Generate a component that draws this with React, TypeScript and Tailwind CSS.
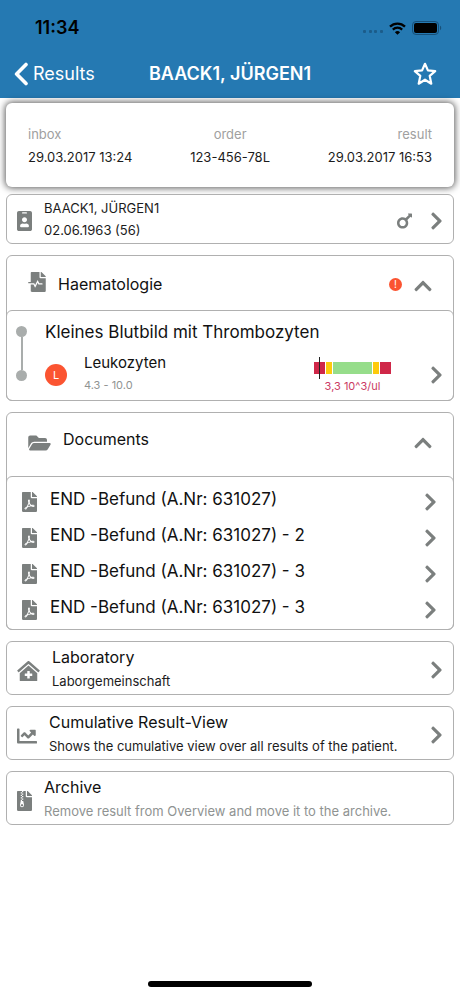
import type { ReactNode } from "react";
import {
  FaChartLine,
  FaChevronRight,
  FaChevronUp,
  FaClinicMedical,
  FaFileArchive,
  FaFileMedicalAlt,
  FaFilePdf,
  FaFolderOpen,
  FaIdBadge,
  FaMars,
} from "react-icons/fa";

const documents = [
  "END -Befund (A.Nr: 631027)",
  "END -Befund (A.Nr: 631027) - 2",
  "END -Befund (A.Nr: 631027) - 3",
  "END -Befund (A.Nr: 631027) - 3",
];

function StatusBar() {
  return (
    <div className="flex h-12 items-center justify-between pt-2 pr-[18px] pl-[35px] text-black">
      <span className="text-[18px] leading-5 font-semibold">11:34</span>
      <div className="flex items-center gap-[6px]">
        <svg className="h-3 w-5" viewBox="0 0 20 12" fill="#1b5c8a" aria-hidden="true">
          <rect x="0" y="8" width="3" height="3" rx="1" />
          <rect x="6" y="8" width="3" height="3" rx="1" />
          <rect x="11" y="8" width="3" height="3" rx="1" />
          <rect x="17" y="8" width="3" height="3" rx="1" />
        </svg>
        <svg className="h-[13px] w-[17px]" viewBox="0 0 17 13" fill="none" stroke="currentColor" aria-hidden="true">
          <path d="M1 4.6a10.8 10.8 0 0 1 15 0" strokeWidth="2.3" />
          <path d="M3.8 7.6a6.8 6.8 0 0 1 9.4 0" strokeWidth="2.2" />
          <path d="M8.5 12.8 5.9 10.2a3.8 3.8 0 0 1 5.2 0z" fill="currentColor" stroke="none" />
        </svg>
        <svg className="h-[14px] w-[30px]" viewBox="0 0 30 14" aria-hidden="true">
          <rect x="0.5" y="0.5" width="26" height="13" rx="3.5" fill="none" stroke="#174f78" />
          <rect x="2" y="2" width="23" height="10" rx="2" fill="#000" />
          <path d="M28 4.8c1.6.6 1.6 3.8 0 4.4z" fill="#174f78" />
        </svg>
      </div>
    </div>
  );
}

function NavBar() {
  return (
    <div className="grid h-[50px] grid-cols-[1fr_auto_1fr] items-center px-[14px] pt-[2px] text-white">
      <button type="button" className="flex items-center gap-[5px] justify-self-start text-[18px] leading-6">
        <svg className="h-6 w-[14px]" viewBox="0 0 14 24" fill="none" stroke="currentColor" strokeWidth="3.6" strokeLinecap="round" strokeLinejoin="round" aria-hidden="true">
          <path d="M12 2.5 2.6 12 12 21.5" />
        </svg>
        Results
      </button>
      <h1 className="text-[18px] leading-6 font-semibold">BAACK1, JÜRGEN1</h1>
      <button type="button" aria-label="Favourite" className="mr-[9px] justify-self-end">
        <svg className="size-6" viewBox="0 0 24 24" fill="none" stroke="currentColor" strokeWidth="2.2" strokeLinejoin="round" aria-hidden="true">
          <path d="M12 1.8l2.9 6.6 7.3.7-5.5 4.8 1.6 7.8-6.3-4-6.3 4 1.6-7.8L1.8 9.1l7.3-.7z" />
        </svg>
      </button>
    </div>
  );
}

function SummaryItem({ label, value, align }: { label: string; value: string; align: string }) {
  return (
    <div className={align}>
      <dt className="text-[13px] leading-6 text-[#a0a0a0]">{label}</dt>
      <dd className="text-[13px] leading-[22px] text-[#1c1c1c]">{value}</dd>
    </div>
  );
}

function Right() {
  return <FaChevronRight className="h-5 w-[13px] shrink-0 text-[#7b7f7e]" aria-hidden="true" />;
}

function Up() {
  return <FaChevronUp className="h-5 w-[18px] shrink-0 text-[#7b7f7e]" aria-hidden="true" />;
}

function LinkCard({ icon, title, text, muted, arrow }: { icon: ReactNode; title: string; text: string; muted?: boolean; arrow?: boolean }) {
  return (
    <button type="button" className="flex h-[54px] w-full items-center gap-3 rounded-md border border-[#b0b0b0] bg-white px-[10px] pt-[2px] text-left">
      <span className="shrink-0 pt-1 text-[#7b7f7e]">{icon}</span>
      <span className="min-w-0 flex-1">
        <span className="block text-[16px] leading-6 text-[#111]">{title}</span>
        <span className={muted ? "block text-[13px] leading-6 text-[#8f9392]" : "block text-[13px] leading-6 text-[#1c1c1c]"}>{text}</span>
      </span>
      {arrow && (
        <span className="pt-[2px]">
          <Right />
        </span>
      )}
    </button>
  );
}

function RangeBar() {
  return (
    <div className="relative flex h-3 w-[77px] gap-px">
      <span className="w-[11px] bg-[#cf2748]" />
      <span className="w-[6px] bg-[#fdca0c]" />
      <span className="flex-1 bg-[#96dd8a]" />
      <span className="w-[6px] bg-[#fdca0c]" />
      <span className="w-[11px] bg-[#cf2748]" />
      <span className="absolute -top-[5px] left-[5px] h-[22px] w-px bg-[#222]" />
    </div>
  );
}

export default function App() {
  return (
    <div className="flex min-h-screen flex-col bg-white font-[Inter,'Liberation_Sans',sans-serif]">
      <header className="bg-[#2579b2]">
        <StatusBar />
        <NavBar />
      </header>

      <main className="flex flex-col px-[6px] pt-[5px]">
        <dl className="flex h-[84px] items-center justify-between rounded-md bg-white px-[22px] shadow-[0_0_7px_1px_rgba(0,0,0,0.65)]">
          <SummaryItem label="inbox" value="29.03.2017 13:24" align="text-left" />
          <SummaryItem label="order" value="123-456-78L" align="text-center" />
          <SummaryItem label="result" value="29.03.2017 16:53" align="text-right" />
        </dl>

        <button type="button" className="relative mt-[7px] flex h-[50px] w-full items-center rounded-md border border-[#b0b0b0] bg-white px-[10px] text-left">
          <FaIdBadge className="mt-1 h-5 w-[15px] shrink-0 text-[#7b7f7e]" aria-hidden="true" />
          <span className="ml-3 flex-1 text-[13px] leading-[22px] text-[#1c1c1c]">
            <span className="block">BAACK1, JÜRGEN1</span>
            <span className="block">02.06.1963 (56)</span>
          </span>
          <FaMars className="mt-1 mr-[18px] h-5 w-[15px] text-[#7b7f7e]" aria-label="male" />
          <span className="pt-1">
            <Right />
          </span>
        </button>

        <div className="flex flex-col gap-[11px] pt-[11px]">
          <section className="rounded-md border border-[#b0b0b0]">
            <button type="button" className="flex h-[54px] w-full items-center px-[21px] pt-[2px] text-left">
              <FaFileMedicalAlt className="mb-1 h-5 w-[18px] text-[#7b7f7e]" aria-hidden="true" />
              <span className="ml-3 flex-1 text-[16px] leading-6 text-[#111]">Haematologie</span>
              <span className="mr-3 flex size-[13px] items-center justify-center rounded-full bg-[#fb5431] text-[10px] leading-3 text-white">!</span>
              <span className="pt-1">
                <Up />
              </span>
            </button>
            <div className="-mx-px -mb-px flex h-[91px] rounded-md border border-[#b0b0b0] pr-[10px] pl-[9px]">
              <div className="mt-[15px] flex h-[55px] w-[11px] flex-col items-center" aria-hidden="true">
                <span className="size-[11px] rounded-full bg-[#a9adac]" />
                <span className="w-[2px] flex-1 bg-[#a9adac]" />
                <span className="size-[11px] rounded-full bg-[#a9adac]" />
              </div>
              <div className="ml-[18px] flex-1 pt-2">
                <h2 className="text-[17px] leading-[26px] text-[#111]">Kleines Blutbild mit Thrombozyten</h2>
                <button type="button" className="flex w-full items-center pt-[6px] text-left">
                  <span className="mt-1 flex size-[22px] items-center justify-center rounded-full bg-[#fb5431] text-[11px] text-white">L</span>
                  <span className="ml-[17px] flex-1">
                    <span className="block text-[15px] leading-6 text-[#111]">Leukozyten</span>
                    <span className="block text-[11px] leading-5 text-[#8f9392]">4.3 - 10.0</span>
                  </span>
                  <span className="mr-[39px] flex flex-col items-center gap-1 pt-[10px]">
                    <RangeBar />
                    <span className="text-[11px] leading-4 text-[#cb3a63]">3,3 10^3/ul</span>
                  </span>
                  <span className="pt-1">
                    <Right />
                  </span>
                </button>
              </div>
            </div>
          </section>

          <section className="rounded-md border border-[#b0b0b0]">
            <button type="button" className="flex h-[63px] w-full items-center px-[21px] pb-[3px] text-left">
              <FaFolderOpen className="h-5 w-[23px] text-[#7b7f7e]" aria-hidden="true" />
              <span className="ml-3 flex-1 pb-2 text-[16px] leading-6 text-[#111]">Documents</span>
              <Up />
            </button>
            <ul className="-mx-px -mb-px rounded-md border border-[#b0b0b0] pt-[7px] pb-px">
              {documents.map((name, index) => (
                <li key={index}>
                  <button type="button" className="flex h-9 w-full items-center pr-4 pl-[15px] text-left">
                    <FaFilePdf className="h-5 w-[15px] text-[#7b7f7e]" aria-hidden="true" />
                    <span className="ml-[13px] flex-1 pb-[6px] text-[17px] leading-6 text-[#111]">{name}</span>
                    <Right />
                  </button>
                </li>
              ))}
            </ul>
          </section>

          <LinkCard icon={<FaClinicMedical className="h-5 w-[23px]" />} title="Laboratory" text="Laborgemeinschaft" arrow />
          <LinkCard icon={<FaChartLine className="size-5" />} title="Cumulative Result-View" text="Shows the cumulative view over all results of the patient." arrow />
          <LinkCard icon={<FaFileArchive className="h-5 w-[15px]" />} title="Archive" text="Remove result from Overview and move it to the archive." muted />
        </div>
      </main>

      <div className="mt-auto flex justify-center pt-6 pb-[9px]">
        <span className="h-[6px] w-[164px] rounded-full bg-black" />
      </div>
    </div>
  );
}
